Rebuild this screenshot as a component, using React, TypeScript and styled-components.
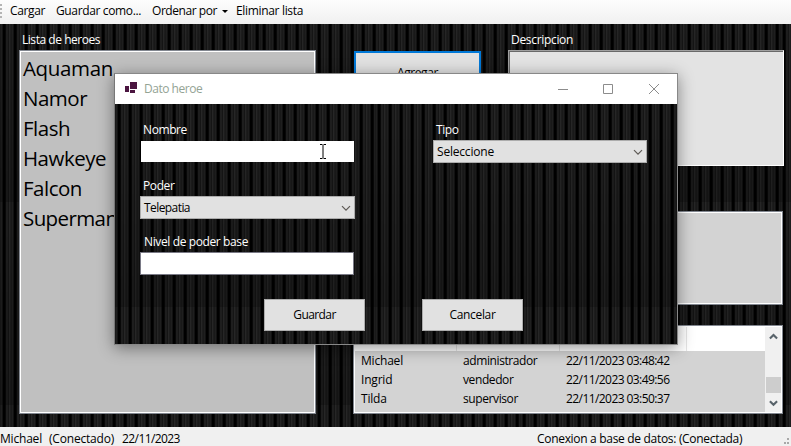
import React from 'react';
import styled, { createGlobalStyle, css } from 'styled-components';

const GlobalStyle = createGlobalStyle`
  * { box-sizing: border-box; }
  body { margin: 0; overflow: hidden; }
  button { font: inherit; padding: 0; margin: 0; color: inherit; }
`;

const ribbed = css`
  background-color: #1b1b1b;
  background-image:
    linear-gradient(180deg, rgba(0, 0, 0, 0) 10%, rgba(0, 0, 0, 0.22) 100%),
    repeating-linear-gradient(
      90deg,
      #191919 0 1px, #1f1f1f 1px 2px, #121212 2px 3px, #000 3px 5px, #080808 5px 6px,
      #1e1e1e 6px 8px, #151515 8px 9px, #262626 9px 10px, #1d1d1d 10px 11px
    );
  background-size: 260px 203px;
`;

const Text = styled.span<{ $track?: number }>`
  letter-spacing: ${({ $track = -0.4 }) => $track}px;
  white-space: pre;
`;

const Window = styled.div`
  position: relative;
  display: flex;
  flex-direction: column;
  width: 791px;
  height: 446px;
  overflow: hidden;
  font: 12px/20px 'Open Sans', 'Noto Sans', sans-serif;
  color: #000;
`;

const Toolbar = styled.header`
  display: flex;
  align-items: center;
  height: 24px;
  padding: 0 0 3px 10px;
  background: linear-gradient(#fdfdfd, #f0f0f0);
`;

const Grip = styled.i`
  width: 2px;
  height: 15px;
  margin: 2px 8px 0 -10px;
  background: repeating-linear-gradient(#b4b4b4 0 2px, transparent 2px 4px);
`;

const MenuItem = styled.div<{ $width: number }>`
  display: flex;
  align-items: center;
  width: ${({ $width }) => $width}px;
`;

const MenuArrow = styled.i`
  margin: 1px 0 0 5px;
  border: 3px solid transparent;
  border-top-color: #000;
  border-bottom: 0;
`;

const Stage = styled.main`
  ${ribbed}
  background-position: 0 -25px;
  display: flex;
  gap: 37px;
  flex: 1;
  min-height: 0;
  padding: 6px 0 0 19px;
`;

const Label = styled.label<{ $indent?: number }>`
  display: block;
  height: 20px;
  padding-left: ${({ $indent = 3 }) => $indent}px;
  color: #fff;
`;

const HeroColumn = styled.section`
  width: 297px;
`;

const framed = css`
  border: 1px solid #828790;
  box-shadow: inset 0 0 0 1px #fff;
`;

const HeroList = styled.ul`
  ${framed}
  height: 364px;
  margin: 0;
  padding: 2px 0 0 3px;
  list-style: none;
  background: #c0c0c0;
  font-size: 20.5px;
  line-height: 30px;
`;

const HeroItem = styled.li`
  height: 30px;
`;

const DetailColumn = styled.section`
  display: flex;
  flex-direction: column;
  width: 431px;
`;

const DetailTop = styled.div`
  display: flex;
  justify-content: space-between;
  height: 136px;
  padding-left: 1px;
`;

const AddButton = styled.button`
  width: 127px;
  height: 44px;
  margin-top: 21px;
  border: 2px solid #0078d7;
  background: #e1e1e1;
`;

const Description = styled.div`
  width: 276px;
`;

const DescriptionBox = styled.div`
  height: 116px;
  border: 1px solid;
  border-color: #a0a0a0 #fff #fff #a0a0a0;
  box-shadow: inset 1px 1px 0 #696969;
  background: #e3e3e3;
`;

const InfoBox = styled.div`
  ${framed}
  align-self: flex-end;
  width: 275px;
  height: 94px;
  margin: 45px 1px 20px 0;
  background: #d3d3d3;
`;

const LogTable = styled.div`
  display: flex;
  width: 430px;
  height: 89px;
  border: 1px solid #828790;
  padding: 1px;
  background: #fff;
`;

const LogBody = styled.div`
  width: 410px;
  background: #d3d3d3;
`;

const columns = css`
  display: grid;
  grid-template-columns: 102px 103px 127px 1fr;
`;

const LogHeader = styled.div`
  ${columns}
  height: 24px;
  background: #fff;
`;

const HeaderCell = styled.div`
  border-right: 1px solid #e5e5e5;
  &:last-child { border: 0; }
`;

const LogRow = styled.div`
  ${columns}
  height: 19px;
  padding-left: 6px;
  line-height: 20px;
`;

const Scrollbar = styled.div`
  display: flex;
  flex-direction: column;
  align-items: center;
  width: 16px;
  background: #f0f0f0;
`;

const ScrollArrow = styled.svg`
  width: 9px;
  height: 7px;
  margin: 6px 0 5px;
  fill: none;
  stroke: #58636a;
  stroke-width: 2.2;
`;

const ScrollThumb = styled.div`
  width: 15px;
  height: 17px;
  margin: 32px 0 1px;
  background: #cdcdcd;
`;

const StatusBar = styled.footer`
  display: flex;
  height: 19px;
  padding-top: 2px;
  background: #f0f0f0;
`;

const StatusCell = styled.div<{ $width: number }>`
  width: ${({ $width }) => $width}px;
`;

const ResizeGrip = styled.svg`
  width: 10px;
  height: 10px;
  margin: 9px 0 0 auto;
  fill: #a8a8a8;
`;

const Dialog = styled.div`
  position: absolute;
  left: 114px;
  top: 73px;
  display: flex;
  flex-direction: column;
  width: 564px;
  height: 272px;
  border: 1px solid #888;
  border-left-color: #777;
  box-shadow: 0 3px 15px rgba(0, 0, 0, 0.42);
`;

const TitleBar = styled.div`
  display: flex;
  align-items: center;
  height: 30px;
  padding-left: 10px;
  background: #fff;
  color: #94a394;
`;

const AppIcon = styled.svg`
  width: 13px;
  height: 12px;
  margin: 0 6px 2px 0;
  fill: #4b1540;
`;

const WindowControls = styled.svg`
  width: 102px;
  height: 11px;
  margin: 0 17px 2px auto;
  fill: none;
  stroke: #8c8c8c;
`;

const DialogBody = styled.form`
  ${ribbed}
  display: flex;
  flex-direction: column;
  flex: 1;
  padding: 15px 30px 0 25px;
`;

const Fields = styled.div`
  display: grid;
  grid-template-columns: 215px 214px;
  grid-auto-rows: 56px;
  justify-content: space-between;
`;

const Field = styled.div`
  display: flex;
  flex-direction: column;
`;

const FieldLabel = styled(Label)`
  height: 21px;
  line-height: 22px;
`;

const FocusedInput = styled.div`
  display: flex;
  align-items: center;
  justify-content: flex-end;
  width: 213px;
  height: 21px;
  margin: 1px 0 0 1px;
  padding-right: 27px;
  background: #fff;
`;

const Input = styled.div`
  width: 214px;
  height: 23px;
  border: 1px solid #7a7a86;
  background: #fff;
`;

const TextCursor = styled.svg`
  width: 8px;
  height: 15px;
  fill: none;
  stroke: #000;
`;

const Combo = styled.div`
  display: flex;
  align-items: center;
  justify-content: space-between;
  height: 23px;
  padding: 1px 3px 0;
  border: 1px solid #acacac;
  background: #e1e1e1;
`;

const Chevron = styled.svg`
  width: 10px;
  height: 7px;
  fill: none;
  stroke: #5e5a55;
  stroke-width: 1.2;
`;

const Actions = styled.div`
  display: flex;
  gap: 57px;
  margin: 12px 0 0 124px;
`;

const ActionButton = styled.button`
  width: 101px;
  height: 32px;
  border: 1px solid #adadad;
  background: #e1e1e1;
`;

const heroes: [string, number][] = [
  ['Aquaman', -0.35], ['Namor', -0.5], ['Flash', -0.5],
  ['Hawkeye', -0.5], ['Falcon', -0.5], ['Superman', -0.6],
];

const log = [
  ['Michael', 'administrador', '22/11/2023 03:48:42'],
  ['Ingrid', 'vendedor', '22/11/2023 03:49:56'],
  ['Tilda', 'supervisor', '22/11/2023 03:50:37'],
];

function Select({ value, track }: { value: string; track: number }) {
  return (
    <Combo>
      <Text $track={track}>{value}</Text>
      <Chevron viewBox="0 0 10 7"><path d="M1 1.2l4 4 4-4" /></Chevron>
    </Combo>
  );
}

function HeroDialog() {
  return (
    <Dialog>
      <TitleBar>
        <AppIcon viewBox="0 0 13 12">
          <path d="M5 0h7v7H5zM0 4h4v6H0zM5 8h5v3H5z" />
        </AppIcon>
        <Text $track={-0.48}>Dato heroe</Text>
        <WindowControls viewBox="0 0 102 11">
          <path d="M0 6.5h10M45.5 1.5h9v9h-9zM91 1l10 10M101 1l-10 10" />
        </WindowControls>
      </TitleBar>
      <DialogBody>
        <Fields>
          <Field>
            <FieldLabel><Text>Nombre</Text></FieldLabel>
            <FocusedInput>
              <TextCursor viewBox="0 0 8 15">
                <path d="M1 .5h2.5M4.5 .5H7M4 1v13M1 14.5h2.5M4.5 14.5H7" />
              </TextCursor>
            </FocusedInput>
          </Field>
          <Field>
            <FieldLabel><Text>Tipo</Text></FieldLabel>
            <Select value="Seleccione" track={-0.2} />
          </Field>
          <Field>
            <FieldLabel><Text>Poder</Text></FieldLabel>
            <Select value="Telepatia" track={-0.57} />
          </Field>
          <span />
          <Field>
            <FieldLabel $indent={4}><Text $track={-0.38}>Nivel de poder base</Text></FieldLabel>
            <Input />
          </Field>
        </Fields>
        <Actions>
          <ActionButton type="button"><Text $track={-0.6}>Guardar</Text></ActionButton>
          <ActionButton type="button"><Text $track={-0.33}>Cancelar</Text></ActionButton>
        </Actions>
      </DialogBody>
    </Dialog>
  );
}

export default function App() {
  return (
    <Window>
      <GlobalStyle />
      <Toolbar>
        <Grip />
        <MenuItem $width={46}><Text $track={-0.37}>Cargar</Text></MenuItem>
        <MenuItem $width={96}><Text $track={-0.36}>Guardar como...</Text></MenuItem>
        <MenuItem $width={84}><Text $track={-0.44}>Ordenar por</Text><MenuArrow /></MenuItem>
        <MenuItem $width={80}><Text $track={-0.33}>Eliminar lista</Text></MenuItem>
      </Toolbar>
      <Stage>
        <HeroColumn>
          <Label><Text $track={-0.46}>Lista de heroes</Text></Label>
          <HeroList>
            {heroes.map(([name, track]) => (
              <HeroItem key={name}><Text $track={track}>{name}</Text></HeroItem>
            ))}
          </HeroList>
        </HeroColumn>
        <DetailColumn>
          <DetailTop>
            <AddButton><Text>Agregar</Text></AddButton>
            <Description>
              <Label><Text $track={-0.32}>Descripcion</Text></Label>
              <DescriptionBox />
            </Description>
          </DetailTop>
          <InfoBox />
          <LogTable>
            <LogBody>
              <LogHeader><HeaderCell /><HeaderCell /><HeaderCell /><HeaderCell /></LogHeader>
              {log.map(([user, role, time]) => (
                <LogRow key={user}>
                  <Text $track={-0.2}>{user}</Text>
                  <Text $track={-0.4}>{role}</Text>
                  <Text $track={-0.57}>{time}</Text>
                </LogRow>
              ))}
            </LogBody>
            <Scrollbar>
              <ScrollArrow viewBox="0 0 9 7"><path d="M.8 5.8l3.7-3.7 3.7 3.7" /></ScrollArrow>
              <ScrollThumb />
              <ScrollArrow viewBox="0 0 9 7"><path d="M.8 1.2l3.7 3.7 3.7-3.7" /></ScrollArrow>
            </Scrollbar>
          </LogTable>
        </DetailColumn>
      </Stage>
      <StatusBar>
        <StatusCell $width={49}><Text $track={-0.2}>Michael</Text></StatusCell>
        <StatusCell $width={73}><Text $track={-0.2}>(Conectado)</Text></StatusCell>
        <StatusCell $width={415}><Text $track={-0.58}>22/11/2023</Text></StatusCell>
        <StatusCell $width={220}><Text $track={-0.31}>Conexion a base de datos: (Conectada)</Text></StatusCell>
        <ResizeGrip viewBox="0 0 10 10">
          <path d="M6 0h2v2H6zM3 4h2v2H3zM6 4h2v2H6zM0 8h2v2H0zM3 8h2v2H3zM6 8h2v2H6z" />
        </ResizeGrip>
      </StatusBar>
      <HeroDialog />
    </Window>
  );
}
